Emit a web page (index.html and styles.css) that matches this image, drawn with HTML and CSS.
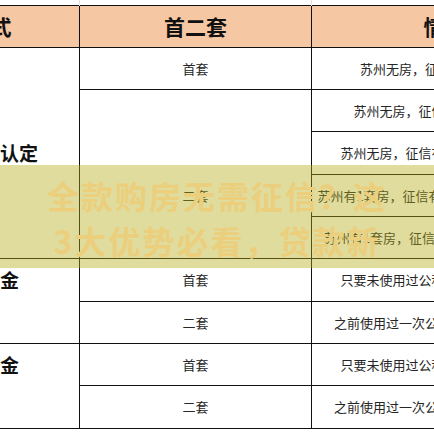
FILE: index.html
```html
<!DOCTYPE html>
<html lang="zh-CN">
<head>
<meta charset="utf-8">
<title>首二套认定</title>
<link rel="stylesheet" href="styles.css">
</head>
<body>
<div class="page">
  <table class="grid">
    <colgroup>
      <col class="c1"><col class="c2"><col class="c3">
    </colgroup>
    <tr class="ghost"><td></td><td></td><td></td></tr>
    <tr class="head">
      <th>方式</th><th>首二套</th><th>情况</th>
    </tr>
    <tr>
      <td class="label" rowspan="5">商贷的认定</td>
      <td>首套</td>
      <td>苏州无房，征信无房贷记录。</td>
    </tr>
    <tr>
      <td rowspan="4" class="low">二套</td>
      <td>苏州无房，征信有一次房贷记录</td>
    </tr>
    <tr class="tall"><td>苏州无房，征信有两次以上房贷记录</td></tr>
    <tr><td>苏州有1套房，征信有一次房贷记录且已结清</td></tr>
    <tr><td>苏州有1套房，征信有一次房贷未结清贷款</td></tr>
    <tr class="tall">
      <td class="label top" rowspan="2">公积金</td>
      <td>首套</td>
      <td>只要未使用过公积金贷款即为首套房</td>
    </tr>
    <tr><td>二套</td><td>之前使用过一次公积金贷款且已经结清</td></tr>
    <tr>
      <td class="label top" rowspan="2">公积金</td>
      <td>首套</td>
      <td>只要未使用过公积金贷款即为首套房</td>
    </tr>
    <tr class="tall"><td>二套</td><td>之前使用过一次公积金贷款且已经结清</td></tr>
  </table>
  <div class="banner">
    <p class="banner-text">全款购房无需征信？这3大优势必看，贷款新</p>
  </div>
</div>
</body>
</html>
```
FILE: styles.css
```css
html, body {
  margin: 0;
  padding: 0;
  background: #ffffff;
}
.page {
  position: relative;
  width: 434px;
  height: 434px;
  overflow: hidden;
  font-family: "Microsoft YaHei", "Noto Sans CJK SC", "Noto Sans", sans-serif;
  color: #262626;
}
.grid {
  border-collapse: collapse;
  table-layout: fixed;
  width: 676px;
  margin-left: -99px;
}
.c1 { width: 178px; }
.c2 { width: 232px; }
.c3 { width: 266px; }
.grid td, .grid th {
  border: 1px solid #111111;
  padding: 0;
  text-align: center;
  vertical-align: middle;
  font-size: 13px;
  white-space: nowrap;
}
.grid tr { height: 42px; }
.grid tr.tall { height: 43px; }
.grid tr.ghost { height: 5px; }
.grid tr.ghost td {
  border-top: none;
  border-bottom: none;
  border-left: 1px solid #e2e2e2;
  border-right: 1px solid #e2e2e2;
}
.head th {
  background: #f6c7a3;
  font-size: 21px;
  font-weight: bold;
  color: #111111;
}
.grid td.label {
  font-size: 19px;
  font-weight: bold;
  color: #111111;
}
.grid td.top {
  vertical-align: top;
  line-height: 42px;
}
.grid td.low {
  padding-top: 43px;
}
.banner {
  position: absolute;
  left: 0;
  right: 0;
  top: 165px;
  height: 103px;
  background: rgba(179, 172, 24, 0.42);
  display: flex;
  justify-content: center;
  align-items: flex-start;
}
.banner-text {
  margin: 8px 0 0;
  width: 348px;
  text-align: center;
  font-size: 32px;
  letter-spacing: 2px;
  line-height: 45px;
  font-weight: bold;
  color: #ebcf7d;
}
```
